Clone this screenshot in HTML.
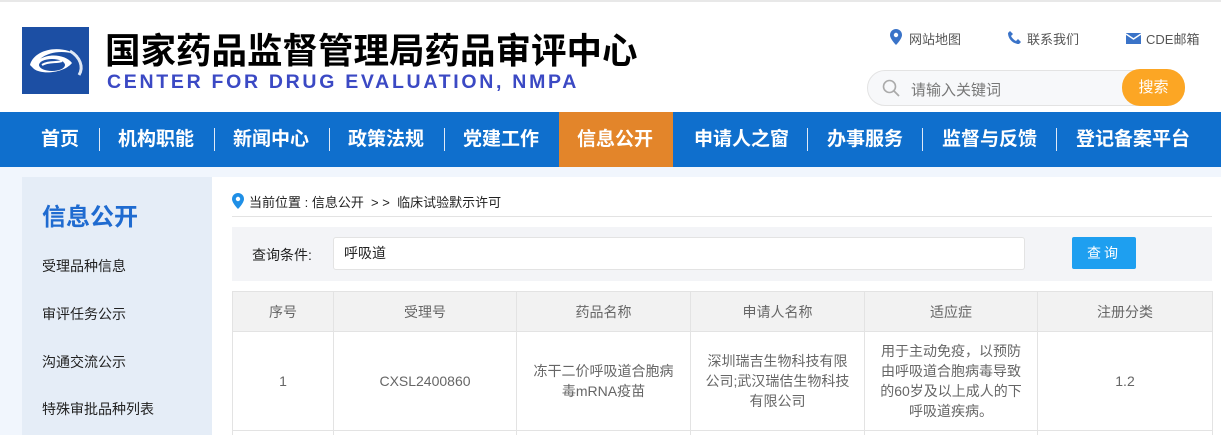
<!DOCTYPE html>
<html><head><meta charset="utf-8"><style>
*{margin:0;padding:0;box-sizing:border-box}
html{width:1221px;height:435px;overflow:hidden}
body{width:1221px;height:435px;overflow:hidden;background:#f1f6fd;font-family:"Liberation Sans","Noto Sans CJK SC",sans-serif;position:relative}
.hdr{position:absolute;left:0;top:0;width:1221px;height:112px;background:#fff;border-top:2px solid #e8e8e8}
.abs{position:absolute}
.nav{position:absolute;left:0;top:112px;width:1221px;height:55px;background:#0f6fcd}
.nav span{position:absolute;top:0;height:55px;line-height:55px;color:#fff;font-weight:bold;font-size:19px;white-space:nowrap}
.sep{position:absolute;top:16px;width:1px;height:23px;background:#dfe9f7}
.side{position:absolute;left:22px;top:177px;width:190px;height:258px;background:#e5edf7}
.side div{position:absolute;left:20px;font-size:14px;color:#222}
.main{position:absolute;left:212px;top:177px;width:1009px;height:258px;background:#fff}
table{position:absolute;left:232px;top:291px;border-collapse:collapse;width:981px;font-size:14px;color:#666}
td,th{border:1px solid #e3e3e3;text-align:center;font-weight:normal;line-height:20px}
th{background:#f2f2f2;height:40px}
td{height:99px;padding:0 12px}
</style></head><body>
<div class="hdr">
 <svg class="abs" style="left:22px;top:25px" width="67" height="67" viewBox="0 0 67 67"><rect width="67" height="67" fill="#1c4fa4"/><path d="M8 38 C12 22 40 16 58 30 C50 24 30 22 18 32 C28 26 44 28 50 36 C42 46 20 48 12 42 Z" fill="#fff"/><ellipse cx="30" cy="38" rx="13" ry="6" fill="#1c4fa4"/><path d="M20 38 C26 34 34 36 40 34" stroke="#fff" stroke-width="2" fill="none"/><path d="M48 24 C58 30 62 40 57 48" stroke="#dfe8f5" stroke-width="3" fill="none"/></svg>
 <div class="abs" style="left:105px;top:21px;font-size:35.5px;font-weight:bold;color:#000;letter-spacing:0;white-space:nowrap">国家药品监督管理局药品审评中心</div>
 <div class="abs" style="left:107px;top:69px;font-size:19.5px;font-weight:bold;color:#3b49c4;letter-spacing:2.7px;white-space:nowrap">CENTER FOR DRUG EVALUATION, NMPA</div>
 <svg class="abs" style="left:890px;top:27px" width="12" height="16" viewBox="0 0 12 16"><path d="M6 0C2.7 0 0 2.6 0 6c0 4 6 10 6 10s6-6 6-10C12 2.6 9.3 0 6 0z" fill="#3a73c8"/><circle cx="6" cy="6" r="2.2" fill="#fff"/></svg>
 <div class="abs" style="left:909px;top:27px;font-size:13px;color:#555">网站地图</div>
 <svg class="abs" style="left:1007px;top:28px" width="15" height="15" viewBox="0 0 15 15"><path d="M3 1l3 3-2 2c1 2 3 4 5 5l2-2 3 3-2 2C6 14 1 9 1 3z" fill="#3a73c8"/></svg>
 <div class="abs" style="left:1027px;top:27px;font-size:13px;color:#555">联系我们</div>
 <svg class="abs" style="left:1126px;top:31px" width="15" height="11" viewBox="0 0 15 11"><rect width="15" height="11" fill="#3a73c8"/><path d="M0 1l7.5 5L15 1" stroke="#fff" stroke-width="1.4" fill="none"/></svg>
 <div class="abs" style="left:1146px;top:27px;font-size:13px;color:#555">CDE邮箱</div>
 <div class="abs" style="left:867px;top:68px;width:318px;height:36px;border:1px solid #e3e3e3;border-radius:18px;background:#f7f8fa"></div>
 <svg class="abs" style="left:882px;top:77px" width="18" height="18" viewBox="0 0 18 18"><circle cx="7.5" cy="7.5" r="6" stroke="#aaa" stroke-width="1.6" fill="none"/><path d="M12 12l5 5" stroke="#aaa" stroke-width="1.8"/></svg>
 <div class="abs" style="left:911px;top:77px;font-size:15px;color:#777">请输入关键词</div>
 <div class="abs" style="left:1122px;top:67px;height:37px;border-radius:18px;background:#fca624;color:#fff;font-size:15px;text-align:center;line-height:37px;width:63px;">搜索</div>
</div>
<div class="nav">
 <span style="left:41px">首页</span><div class="sep" style="left:99px"></div>
 <span style="left:118px">机构职能</span><div class="sep" style="left:214px"></div>
 <span style="left:233px">新闻中心</span><div class="sep" style="left:329px"></div>
 <span style="left:348px">政策法规</span><div class="sep" style="left:444px"></div>
 <span style="left:463px">党建工作</span>
 <div class="abs" style="left:559px;top:0;width:114px;height:55px;background:#e3852a"></div>
 <span style="left:577px">信息公开</span>
 <span style="left:694px">申请人之窗</span><div class="sep" style="left:807px"></div>
 <span style="left:827px">办事服务</span><div class="sep" style="left:922px"></div>
 <span style="left:942px">监督与反馈</span><div class="sep" style="left:1056px"></div>
 <span style="left:1076px">登记备案平台</span>
</div>
<div class="side">
 <div style="top:20px;font-size:24px;font-weight:bold;color:#1f6bd0">信息公开</div>
 <div style="top:79px">受理品种信息</div>
 <div style="top:127px">审评任务公示</div>
 <div style="top:175px">沟通交流公示</div>
 <div style="top:222px">特殊审批品种列表</div>
</div>
<div class="main"></div>
<svg class="abs" style="left:232px;top:193px" width="12" height="16" viewBox="0 0 12 16"><path d="M6 0C2.7 0 0 2.6 0 6c0 4 6 10 6 10s6-6 6-10C12 2.6 9.3 0 6 0z" fill="#1f8fe6"/><circle cx="6" cy="6" r="2.2" fill="#fff"/></svg>
<div class="abs" style="left:249px;top:192px;font-size:13px;color:#222">当前位置 : 信息公开 &nbsp;&gt; &gt; &nbsp;临床试验默示许可</div>
<div class="abs" style="left:232px;top:216px;width:980px;height:1px;background:#e3e3e3"></div>
<div class="abs" style="left:232px;top:227px;width:980px;height:54px;background:#f3f4f7"></div>
<div class="abs" style="left:252px;top:245px;font-size:14px;color:#222">查询条件:</div>
<div class="abs" style="left:333px;top:237px;width:692px;height:33px;background:#fff;border:1px solid #e3e3e3;border-radius:3px;padding-left:10px;line-height:31px;font-size:14px;color:#222">呼吸道</div>
<div class="abs" style="left:1072px;top:237px;width:64px;height:32px;background:#1e9ff0;border-radius:2px;color:#fff;font-size:14px;text-align:center;line-height:32px;letter-spacing:3px">查询</div>
<table>
<tr><th style="width:101px">序号</th><th style="width:183px">受理号</th><th style="width:174px">药品名称</th><th style="width:174px">申请人名称</th><th style="width:173px">适应症</th><th>注册分类</th></tr>
<tr><td>1</td><td>CXSL2400860</td><td>冻干二价呼吸道合胞病毒mRNA疫苗</td><td>深圳瑞吉生物科技有限公司;武汉瑞佶生物科技有限公司</td><td>用于主动免疫，以预防由呼吸道合胞病毒导致的60岁及以上成人的下呼吸道疾病。</td><td>1.2</td></tr>
</table>
<div class="abs" style="left:232px;top:430px;width:981px;height:5px;border-left:1px solid #e3e3e3;border-right:1px solid #e3e3e3"></div>
<div class="abs" style="left:333px;top:430px;width:1px;height:5px;background:#e3e3e3"></div>
<div class="abs" style="left:516px;top:430px;width:1px;height:5px;background:#e3e3e3"></div>
<div class="abs" style="left:690px;top:430px;width:1px;height:5px;background:#e3e3e3"></div>
<div class="abs" style="left:864px;top:430px;width:1px;height:5px;background:#e3e3e3"></div>
<div class="abs" style="left:1037px;top:430px;width:1px;height:5px;background:#e3e3e3"></div>
</body></html>
